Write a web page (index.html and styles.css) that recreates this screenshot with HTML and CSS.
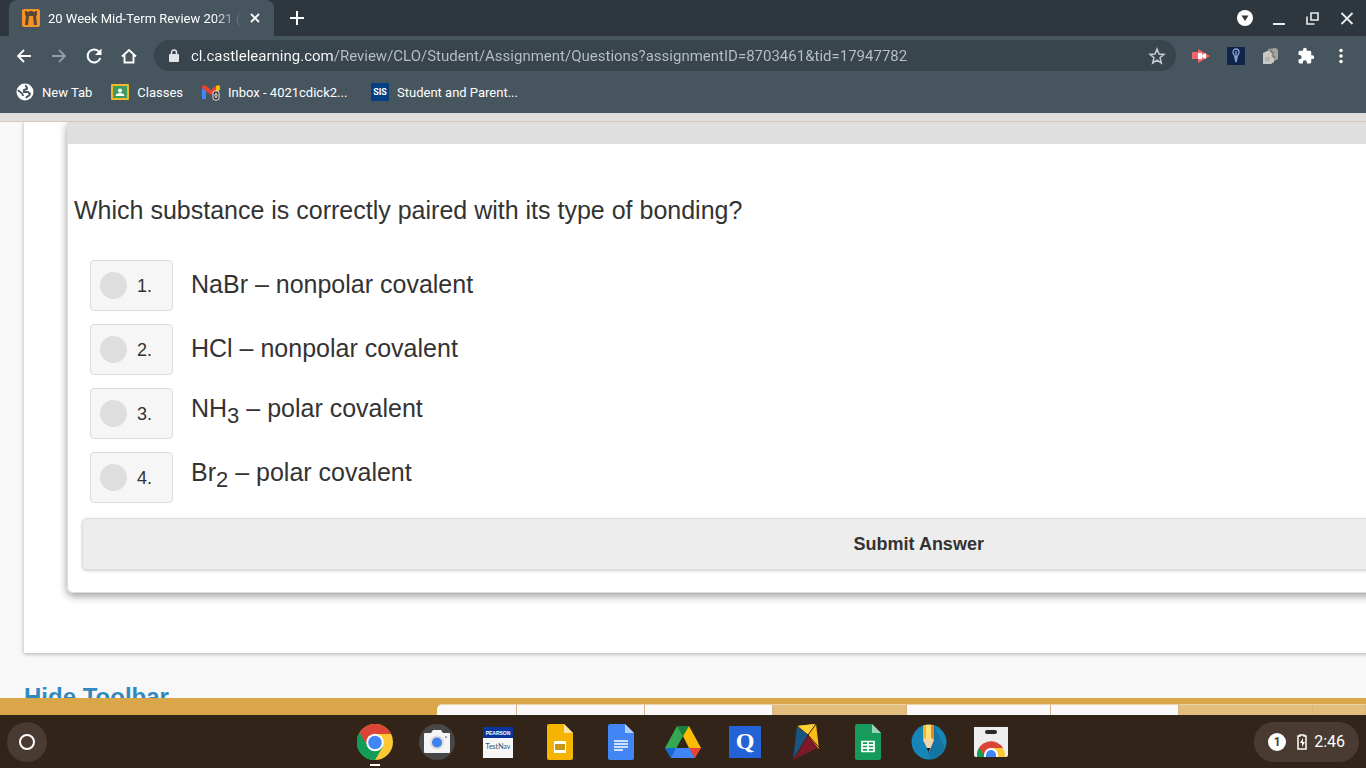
FILE: index.html
```html
<!DOCTYPE html>
<html lang="en">
<head>
    <meta charset="UTF-8">
    <meta name="viewport" content="width=device-width, initial-scale=1.0">
    <title>20 Week Mid-Term Review 2021</title>
    <link rel="stylesheet" href="styles.css">
</head>
<body>
    <header class="browser">
        <div class="tab-strip">
            <div class="tab">
                <svg class="favicon" viewBox="0 0 18 18"><rect width="18" height="18" rx="2" fill="#f59426"/><path d="M3 2h2v1h2V2h4v1h2V2h2v4l-1 1 1 9h-3l-1-9H7l-1 9H3l1-9-1-1z" fill="#5d4636"/></svg>
                <span class="tab-title">20 Week Mid-Term Review 2021 (</span>
                <button class="icon-button tab-close" aria-label="Close tab"><svg width="12" height="12" viewBox="0 0 12 12"><path d="M2 2l8 8M10 2l-8 8" stroke="#fff" stroke-width="1.800"/></svg></button>
            </div>
            <button class="icon-button new-tab" aria-label="New tab"><svg width="14" height="14" viewBox="0 0 14 14"><path d="M7 0v14M0 7h14" stroke="#fff" stroke-width="2"/></svg></button>
            <div class="window-buttons">
                <button class="icon-button" aria-label="Search tabs"><svg width="16" height="16" viewBox="0 0 16 16"><circle cx="8" cy="8" r="8" fill="#fff"/><path d="M4.500 5.500h7L8 11z" fill="#2d373d"/></svg></button>
                <button class="icon-button" aria-label="Minimize"><svg width="16" height="16" viewBox="0 0 16 16"><path d="M2 14h12" stroke="#e8edf0" stroke-width="2"/></svg></button>
                <button class="icon-button" aria-label="Restore"><svg width="16" height="16" viewBox="0 0 16 16"><path d="M6 3h7v7H6zM2 6.500V14h7.500" fill="none" stroke="#e8edf0" stroke-width="1.600"/></svg></button>
                <button class="icon-button" aria-label="Close"><svg width="16" height="16" viewBox="0 0 16 16"><path d="M2.500 3l11 11M13.500 3l-11 11" stroke="#e8edf0" stroke-width="1.800"/></svg></button>
            </div>
        </div>

        <div class="address-row">
            <div class="nav-buttons">
                <button class="icon-button" aria-label="Back"><svg width="18" height="18" viewBox="0 0 18 18"><path d="M16 9H3M9 3L3 9l6 6" fill="none" stroke="#fff" stroke-width="1.800"/></svg></button>
                <button class="icon-button" aria-label="Forward"><svg width="18" height="18" viewBox="0 0 18 18"><path d="M2 9h13M9 3l6 6-6 6" fill="none" stroke="#8f9da4" stroke-width="1.800"/></svg></button>
                <button class="icon-button" aria-label="Reload"><svg width="18" height="18" viewBox="0 0 18 18"><path d="M14.300 5A6.500 6.500 0 1 0 15.300 11" fill="none" stroke="#fff" stroke-width="2"/><path d="M16.500 1.500V8H10z" fill="#fff"/></svg></button>
                <button class="icon-button" aria-label="Home"><svg width="18" height="18" viewBox="0 0 18 18"><path d="M2 9.500L9 3l7 6.500M4.500 8v7.500h9V8" fill="none" stroke="#fff" stroke-width="1.900"/></svg></button>
            </div>
            <div class="omnibox">
                <svg width="12" height="14" viewBox="0 0 12 14"><rect x="1" y="5" width="10" height="8" rx="1" fill="#e1e5e7"/><path d="M3.500 6V3.500a2.500 2.500 0 0 1 5 0V6" fill="none" stroke="#e1e5e7" stroke-width="1.500"/></svg>
                <input class="url" type="text" aria-label="Address" value="cl.castlelearning.com/Review/CLO/Student/Assignment/Questions?assignmentID=8703461&amp;tid=17947782">
                <button class="icon-button" aria-label="Bookmark this page"><svg width="18" height="18" viewBox="0 0 18 18"><path d="M9 2l2 5 5 .400-4 3.400 1.300 5.200L9 13.200 4.700 16 6 10.800 2 7.400 7 7z" fill="none" stroke="#c5cbce" stroke-width="1.500"/></svg></button>
            </div>
            <div class="extensions">
                <button class="icon-button" aria-label="Screencastify"><svg width="18" height="18" viewBox="0 0 18 18"><path d="M0 5h6V2l12 7-12 7v-4H0z" fill="#f0686c"/><path d="M6 6h4v2l4-2v6l-4-2v2H6z" fill="#fff"/></svg></button>
                <button class="icon-button" aria-label="Key"><svg width="18" height="18" viewBox="0 0 18 18"><rect width="18" height="18" fill="#10234a"/><path d="M6 5a3 3 0 0 1 6 0c0 3-2 3-2 6l-1 4-1-4C8 8 6 8 6 5zM9 4v7" fill="none" stroke="#8da5d0" stroke-width="1.300"/></svg></button>
                <button class="icon-button" aria-label="Dice"><svg width="18" height="18" viewBox="0 0 18 18"><path d="M6 2l8-1 2 2v9l-4 2-5-4z" fill="#a5a4a1"/><path d="M1 6l4-2h5l2 2v9l-3 2H1z" fill="#c9c8c5"/><path d="M8 3l4 4M10 8l3 3" stroke="#7d7b79" stroke-width="2"/><path d="M3 10h5v4H3z" fill="#b5b3b0"/></svg></button>
                <button class="icon-button" aria-label="Extensions"><svg width="18" height="18" viewBox="0 0 24 24"><path d="M20.500 11H19V7c0-1.100-.9-2-2-2h-4V3.500a2.500 2.500 0 0 0-5 0V5H4c-1.100 0-2 .9-2 2v3.800h1.500a2.700 2.700 0 0 1 0 5.400H2V20c0 1.100.9 2 2 2h3.800v-1.500a2.700 2.700 0 0 1 5.400 0V22H17c1.100 0 2-.9 2-2v-4h1.500a2.500 2.500 0 0 0 0-5z" fill="#fff"/></svg></button>
                <button class="icon-button" aria-label="Menu"><svg width="18" height="18" viewBox="0 0 18 18" fill="#fff"><circle cx="9" cy="3.500" r="1.800"/><circle cx="9" cy="9" r="1.800"/><circle cx="9" cy="14.500" r="1.800"/></svg></button>
            </div>
        </div>

        <nav class="bookmarks">
            <a href="#"><svg width="18" height="18" viewBox="0 0 18 18"><circle cx="9" cy="9" r="8.500" fill="#fff"/><path d="M10 2c-1 2 2 2 1 4l-3 1v2h4l2 2c0 2-3 2-4 4M2 7c2 3 5 2 5 6" fill="none" stroke="#46555e" stroke-width="1.900"/></svg>New Tab</a>
            <a href="#"><svg width="18" height="18" viewBox="0 0 18 18"><rect y="1" width="18" height="16" rx="1" fill="#f0b929"/><rect x="2" y="3" width="14" height="12" fill="#3f9a5d"/><circle cx="9" cy="7.500" r="2" fill="#fff"/><path d="M4.500 13c0-4 9-4 9 0z" fill="#fff"/></svg>Classes</a>
            <a class="bookmark-long" href="#"><svg width="18" height="18" viewBox="0 0 18 18"><path d="M0 5l4 3v8H0z" fill="#4285f4"/><path d="M0 5V3l3-1 6 5 6-5 3 1v2L9 12z" fill="#ea4335"/><path d="M14 3l3-1 1 2v3l-4 2z" fill="#fbbc04"/><rect x="11" y="8" width="6" height="9" rx="2" fill="#222" stroke="#eee"/><path d="M13 12a1 2 0 0 1 2 0v1a1 2 0 0 1-2 0z" fill="none" stroke="#fff"/></svg>Inbox - 4021cdick2...</a>
            <a class="bookmark-long" href="#"><svg width="18" height="18" viewBox="0 0 18 18"><rect width="18" height="18" fill="#063f82"/><text x="9" y="12" text-anchor="middle" class="sis">SIS</text></svg>Student and Parent...</a>
        </nav>
    </header>

    <main class="viewport">
        <div class="page">
            <div class="top-line"></div>
            <div class="sheet">
                <form class="card">
                    <div class="card-header"></div>
                    <p class="question">Which substance is correctly paired with its type of bonding?</p>
                    <div class="choices">
                        <label class="choice"><span class="choice-box"><input type="radio" name="answer">1.</span><span>NaBr – nonpolar covalent</span></label>
                        <label class="choice"><span class="choice-box"><input type="radio" name="answer">2.</span><span>HCl – nonpolar covalent</span></label>
                        <label class="choice"><span class="choice-box"><input type="radio" name="answer">3.</span><span>NH<sub>3</sub> – polar covalent</span></label>
                        <label class="choice"><span class="choice-box"><input type="radio" name="answer">4.</span><span>Br<sub>2</sub> – polar covalent</span></label>
                    </div>
                    <button class="submit" type="button">Submit Answer</button>
                </form>
            </div>
            <a class="hide-toolbar" href="#">Hide Toolbar</a>
        </div>
        <div class="toolbar">
            <span class="tool tool-first"></span>
            <span class="tool tool-wide"></span>
            <span class="tool tool-wide"></span>
            <span class="tool tool-wide tool-off"></span>
            <span class="tool tool-wider"></span>
            <span class="tool tool-wide"></span>
            <span class="tool tool-wide tool-off"></span>
            <span class="tool tool-last tool-off"></span>
        </div>
    </main>

    <footer class="shelf">
        <button class="launcher" aria-label="Launcher"><svg width="18" height="18" viewBox="0 0 18 18"><circle cx="9" cy="9" r="7" fill="none" stroke="#fff" stroke-width="2"/></svg></button>
        <div class="apps">
            <button class="app app-active" aria-label="Chrome"><svg viewBox="0 0 36 36"><circle cx="18" cy="18" r="18" fill="#fcc934"/><path d="M2.400 9A18 18 0 0 1 34 10H18l-8 13z" fill="#db4437"/><path d="M2.400 8.500A18 18 0 0 0 18 36l8-13.500H11z" fill="#109d58"/><circle cx="18" cy="18.500" r="8.700" fill="#fff"/><circle cx="18" cy="18.500" r="6.800" fill="#4285f4"/></svg></button>
            <button class="app" aria-label="Camera"><svg viewBox="0 0 36 36"><circle cx="18" cy="18" r="18" fill="#474747"/><path d="M6 9h6l2-3h8l2 3h6q1 0 1 1v18q0 1-1 1H6q-1 0-1-1V10q0-1 1-1z" fill="#f5f5f5"/><circle cx="18" cy="18.500" r="7" fill="#dcdcdc"/><circle cx="18" cy="18.500" r="5" fill="#3f82ef"/><circle cx="27" cy="13" r="1" fill="#888"/></svg></button>
            <button class="app" aria-label="TestNav"><svg viewBox="0 0 36 36"><rect x="3" y="3" width="30" height="31" fill="#f7f7f7"/><rect x="3" y="3" width="30" height="11" fill="#07359d"/><text x="18" y="11" text-anchor="middle" class="pearson">PEARSON</text><text x="18" y="25" text-anchor="middle" class="testnav">TestNav</text></svg></button>
            <button class="app" aria-label="Slides"><svg viewBox="0 0 36 36"><path d="M7 0h15l9 9v25q0 2-2 2H7q-2 0-2-2V2q0-2 2-2z" fill="#f4b400"/><path d="M22 0l9 9h-9z" fill="#fbe4a0"/><rect x="12" y="17" width="12" height="12" fill="#fff"/><rect x="13" y="20" width="10" height="6" fill="#c99516"/></svg></button>
            <button class="app" aria-label="Docs"><svg viewBox="0 0 36 36"><path d="M7 0h15l9 9v25q0 2-2 2H7q-2 0-2-2V2q0-2 2-2z" fill="#4285f4"/><path d="M22 0l9 9h-9z" fill="#b3d0fc"/><path d="M11 17h14M11 20h14M11 23h14M11 26h9" stroke="#fff" stroke-width="1.500"/></svg></button>
            <button class="app" aria-label="Drive"><svg viewBox="0 0 36 36"><path d="M12 2h12l-6 10z" fill="#188038"/><path d="M12 2l6 10L6 34 0 24z" fill="#34a853"/><path d="M24 2l12 22H24L18 12z" fill="#fbbc04"/><path d="M0 24h12L6 34z" fill="#1967d2"/><path d="M11 24h14l5 10H6z" fill="#4285f4"/><path d="M24 24h12l-6 10z" fill="#ea4335"/></svg></button>
            <button class="app" aria-label="Quizlet"><svg viewBox="0 0 36 36"><rect x="2" y="2" width="32" height="32" fill="#2463d5"/><text x="18" y="25" text-anchor="middle" class="quiz">Q</text></svg></button>
            <button class="app" aria-label="Kite"><svg viewBox="0 0 36 36"><path d="M9 2L26 0 19 11z" fill="#ffc629"/><path d="M9 2l11 9L5 36z" fill="#175683"/><path d="M20 11l11 12L5 36z" fill="#7d1926"/><path d="M28 0l3 25-11-14z" fill="#ffbd13"/><path d="M28 0L20 11 9 2z" fill="#ffcf37"/><path d="M28 0L20 11 5 36M9 2l11 9 11 12" fill="none" stroke="#40251a"/></svg></button>
            <button class="app" aria-label="Sheets"><svg viewBox="0 0 36 36"><path d="M7 0h15l9 9v25q0 2-2 2H7q-2 0-2-2V2q0-2 2-2z" fill="#169b5a"/><path d="M22 0l9 9h-9z" fill="#9bd4b8"/><path d="M12 17.500h12v10H12zM12 20.800h12M12 24.200h12M18 17.500v10" fill="none" stroke="#fff" stroke-width="1.700"/></svg></button>
            <button class="app" aria-label="Sketch"><svg viewBox="0 0 36 36"><circle cx="18" cy="18" r="17.500" fill="#1686b9"/><path d="M23 2l11 22q-5 10-15 11.500l-2-7z" fill="#1474a2"/><path d="M12 1.600q6-2 11 0V16H12z" fill="#f9b31c"/><path d="M15 1h5v15h-5z" fill="#ffe07a"/><path d="M20 1l3 1v14h-3z" fill="#e88917"/><path d="M12 16l2-2 4 2 3-2 2 2-5 12z" fill="#f3d4ad"/><path d="M15.500 24h4L17.600 28z" fill="#15181c"/></svg></button>
            <button class="app" aria-label="Web Store"><svg viewBox="0 0 36 36"><path d="M1 3h34v28q0 2-2 2H3q-2 0-2-2z" fill="#eee"/><rect x="12" y="6" width="12" height="4" rx="2" fill="#292929"/><path d="M4 33v-2a14 14 0 0 1 26-7H18L9 33z" fill="#db4437"/><path d="M6 23.500L12 33H4v-2q0-4 2-7.500z" fill="#109d58"/><path d="M18 24h12q2 3 2 7v2h-8z" fill="#fcc934"/><path d="M11 33v-2a7 7 0 0 1 14 0v2z" fill="#fff"/><path d="M13 33v-2a5 5 0 0 1 10 0v2z" fill="#4285f4"/></svg></button>
        </div>
        <button class="status">
            <span class="badge">1</span>
            <svg width="10" height="16" viewBox="0 0 10 16"><path d="M3 2V1h4v1h2v13H1V2z" fill="none" stroke="#fff" stroke-width="1.500"/><path d="M6 4L3 9h2v4l3-5H6z" fill="#fff"/></svg>
            <span>2:46</span>
        </button>
    </footer>
</body>
</html>
```
FILE: styles.css
```css
* {
    box-sizing: border-box;
}
body {
    margin: 0;
    height: 100vh;
    display: flex;
    flex-direction: column;
    overflow: hidden;
    font-family: 'Liberation Sans', Arial, sans-serif;
    color: #333;
}
button {
    border: none;
    padding: 0;
    cursor: pointer;
}
svg {
    display: block;
    flex: none;
}
.icon-button {
    display: flex;
    background: none;
}

/* Browser window */
.browser {
    background-color: #46555e;
    color: #fff;
    font-family: Roboto, sans-serif;
}
.tab-strip {
    display: flex;
    align-items: center;
    height: 36px;
    padding: 0 11px 0 9px;
    background-color: #2d373d;
}
.tab {
    display: flex;
    align-items: center;
    width: 265px;
    height: 36px;
    padding: 0 13px;
    border-radius: 8px 8px 0 0;
    background-color: #46555e;
}
.favicon {
    width: 18px;
    height: 18px;
    margin-right: 8px;
}
.tab-title {
    flex: 1;
    overflow: hidden;
    white-space: nowrap;
    font-size: 13px;
    mask-image: linear-gradient(to right, #000 165px, transparent 195px);
}
.tab-close {
    margin-left: 8px;
}
.new-tab {
    margin-left: 16px;
}
.window-buttons {
    display: flex;
    gap: 18px;
    margin-left: auto;
}
.address-row {
    display: flex;
    align-items: center;
    height: 39px;
    padding: 0 16px 0 15px;
}
.nav-buttons {
    display: flex;
    gap: 17px;
    margin-right: 16px;
}
.omnibox {
    flex: 1;
    display: flex;
    align-items: center;
    height: 31px;
    padding: 0 10px 0 14px;
    border-radius: 16px;
    background-color: #38454c;
}
.url {
    flex: 1;
    min-width: 0;
    margin-left: 11px;
    padding: 0;
    border: none;
    outline: none;
    font-family: Roboto, sans-serif;
    font-size: 15px;
    color: transparent;
    background: linear-gradient(to right, #fff 142px, #b9c1c5 142px);
    background-clip: text;
    -webkit-background-clip: text;
}
.extensions {
    display: flex;
    gap: 17px;
    margin-left: 16px;
}
.bookmarks {
    display: flex;
    gap: 19px;
    height: 38px;
    padding: 0 16px 4px;
}
.bookmarks a {
    display: flex;
    align-items: center;
    gap: 8px;
    color: #fff;
    font-size: 13px;
    text-decoration: none;
    white-space: nowrap;
}
.bookmarks .bookmark-long {
    width: 150px;
}
.sis {
    font: bold 9px Roboto, sans-serif;
    fill: #fff;
}

/* Assignment page */
.viewport {
    flex: 1;
    min-height: 0;
    display: flex;
    flex-direction: column;
}
.page {
    flex: 1;
    min-height: 0;
    overflow: hidden;
    background-color: #f8f8f8;
}
.top-line {
    height: 9px;
    background-color: #e1dedd;
    border-bottom: 1px solid #d8c4ba;
}
.sheet {
    width: 131%;
    margin-left: 24px;
    padding: 0 43px 60px;
    background-color: #fff;
    box-shadow: 0 1px 4px rgba(0, 0, 0, 0.3);
    clip-path: inset(0 0 -8px -8px);
}
.card {
    padding-bottom: 22px;
    border: 1px solid #ddd;
    border-top: none;
    border-radius: 0 0 6px 6px;
    box-shadow: 0 3px 8px rgba(0, 0, 0, 0.4);
    clip-path: inset(0 -12px -12px -12px);
}
.card-header {
    height: 22px;
    background-color: #dfdfdf;
}
.question {
    margin: 51px 6px 35px;
    font-size: 25px;
    line-height: 30px;
}
.choices {
    display: grid;
    gap: 13px;
    margin-left: 22px;
}
.choice {
    display: flex;
    align-items: center;
    gap: 18px;
    height: 51px;
    font-size: 25px;
    line-height: 30px;
}
.choice > span:last-child {
    padding-bottom: 4px;
}
.choice-box {
    display: flex;
    align-items: center;
    gap: 10px;
    width: 83px;
    height: 51px;
    padding-left: 9px;
    border: 1px solid #ddd;
    border-radius: 4px;
    background-color: #f6f6f6;
    font-size: 18px;
}
.choice-box input {
    appearance: none;
    width: 27px;
    height: 27px;
    margin: 0;
    border-radius: 50%;
    background-color: #dedede;
}
.choice-box input:checked {
    background-color: #3388cc;
}
.choice sub {
    font-size: 22px;
}
.submit {
    display: block;
    width: calc(100% - 28px);
    height: 52px;
    margin: 15px 14px 0;
    border: 1px solid #ddd;
    border-radius: 5px;
    background-color: #ededed;
    box-shadow: 0 1px 3px rgba(0, 0, 0, 0.2);
    font-family: inherit;
    font-size: 18px;
    font-weight: bold;
    color: #333;
}
.hide-toolbar {
    display: block;
    margin: 30px 24px;
    font-size: 24px;
    font-weight: bold;
    line-height: 28px;
    color: #3388c0;
    text-decoration: none;
}
.toolbar {
    display: flex;
    height: 17px;
    padding: 6px 0 0 32%;
    background-color: #d9a74a;
}
.tool {
    flex: none;
    border-top: 1px solid #ead2a4;
    border-right: 1px solid #d3b78b;
    background-color: #faf8f8;
}
.tool-first {
    width: 80px;
    border-top-left-radius: 5px;
}
.tool-wide {
    width: 128px;
}
.tool-wider {
    width: 144px;
}
.tool-last {
    flex: 1;
}
.tool-off {
    background-color: #e2bd7e;
    border-right-color: #dbb573;
}
.tool-wide.tool-off {
    width: 134px;
}

/* Shelf */
.shelf {
    display: grid;
    grid-template-columns: 1fr auto 1fr;
    align-items: center;
    height: 53px;
    padding: 0 7px;
    background-color: #322419;
}
.launcher {
    display: flex;
    align-items: center;
    justify-content: center;
    width: 40px;
    height: 40px;
    border-radius: 50%;
    background-color: #493a32;
}
.apps {
    display: flex;
    justify-content: space-between;
    width: 652px;
}
.app {
    position: relative;
    width: 36px;
    height: 36px;
    background: none;
}
.app svg {
    width: 36px;
    height: 36px;
}
.app-active::after {
    content: '';
    position: absolute;
    left: 13px;
    bottom: -6px;
    width: 10px;
    height: 2px;
    background-color: #fff;
}
.pearson {
    font: bold 5px 'Liberation Sans', sans-serif;
    fill: #fff;
}
.testnav {
    font: 7px Lato, sans-serif;
    fill: #24547a;
}
.quiz {
    font: bold 24px 'Liberation Serif', serif;
    fill: #fff;
}
.status {
    display: flex;
    align-items: center;
    justify-self: end;
    height: 40px;
    padding: 0 14px;
    border-radius: 20px;
    background-color: #493a32;
    font-family: Roboto, sans-serif;
    font-size: 16px;
    color: #fff;
}
.status svg {
    margin: 0 7px 0 11px;
}
.badge {
    width: 18px;
    height: 18px;
    border-radius: 50%;
    background-color: #fff;
    font-size: 12px;
    font-weight: bold;
    line-height: 18px;
    color: #493a32;
}
```
